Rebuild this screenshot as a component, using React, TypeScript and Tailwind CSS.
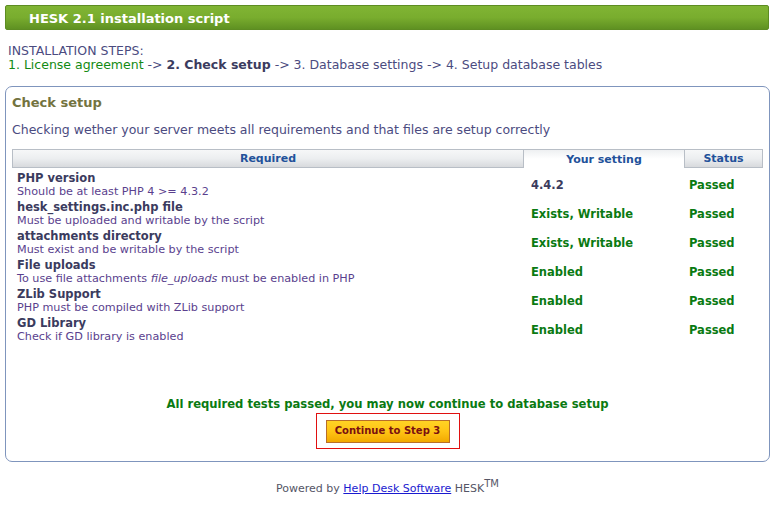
import React from "react";

type Check = {
  title: string;
  desc: React.ReactNode;
  setting: string;
  settingClass: string;
};

const checks: Check[] = [
  {
    title: "PHP version",
    desc: "Should be at least PHP 4 >= 4.3.2",
    setting: "4.4.2",
    settingClass: "text-[#3b3b5e]",
  },
  {
    title: "hesk_settings.inc.php file",
    desc: "Must be uploaded and writable by the script",
    setting: "Exists, Writable",
    settingClass: "text-[#0a7a12]",
  },
  {
    title: "attachments directory",
    desc: "Must exist and be writable by the script",
    setting: "Exists, Writable",
    settingClass: "text-[#0a7a12]",
  },
  {
    title: "File uploads",
    desc: (
      <>
        To use file attachments <i>file_uploads</i> must be enabled in PHP
      </>
    ),
    setting: "Enabled",
    settingClass: "text-[#0a7a12]",
  },
  {
    title: "ZLib Support",
    desc: "PHP must be compiled with ZLib support",
    setting: "Enabled",
    settingClass: "text-[#0a7a12]",
  },
  {
    title: "GD Library",
    desc: "Check if GD library is enabled",
    setting: "Enabled",
    settingClass: "text-[#0a7a12]",
  },
];

export default function App() {
  return (
    <div
      className="w-[775px] h-[510px] bg-white text-[#4b4b7f] overflow-hidden"
      style={{ fontFamily: '"DejaVu Sans", Verdana, sans-serif' }}
    >
      {/* title bar */}
      <div className="mx-[5px] mt-[5px] w-[764px] h-[25px] rounded-[2px] border border-[#5d8c22] bg-gradient-to-b from-[#80b434] via-[#79ad2e] to-[#5f9122] flex items-center pl-[23px] pt-[2px]">
        <span className="text-white font-bold text-[13px] leading-none">HESK 2.1 installation script</span>
      </div>

      {/* steps */}
      <div className="pl-[8px] pt-[14px] text-[12.5px] leading-[14px]">
        <div>INSTALLATION STEPS:</div>
        <div>
          <span className="text-[#138a13]">1. License agreement</span> -&gt;{" "}
          <b className="text-[#3b3b5e]">2. Check setup</b> -&gt; 3. Database settings -&gt; 4. Setup database tables
        </div>
      </div>

      {/* main panel */}
      <div className="mx-[5px] mt-[14px] w-[765px] h-[376px] border border-[#7f95bd] rounded-[7px] px-[6px] flex flex-col">
        <div className="pt-[8px] text-[13px] leading-[16px] font-bold text-[#73733f]">Check setup</div>
        <div className="pt-[11px] text-[12.5px] leading-[15px]">
          Checking wether your server meets all requirements and that files are setup correctly
        </div>

        {/* requirements table */}
        <div className="mt-[12px] w-[751px]">
          <div className="flex h-[19px] text-[11px] font-bold text-[#22519a]">
            <div className="w-[512px] pt-[2px] border border-[#b8bec6] bg-gradient-to-b from-[#f6f7f8] via-[#eceef0] to-[#d8dadd] flex items-center justify-center">
              Required
            </div>
            <div className="w-[160px] pt-[2px] border-t border-[#b8bec6] bg-gradient-to-b from-[#eef0f2] via-[#ffffff] to-[#ffffff] flex items-center justify-center">
              Your setting
            </div>
            <div className="w-[79px] pt-[2px] border border-[#b8bec6] bg-gradient-to-b from-[#f6f7f8] via-[#eceef0] to-[#d8dadd] flex items-center justify-center">
              Status
            </div>
          </div>

          {checks.map((c) => (
            <div key={c.title} className="flex h-[29px] items-center">
              <div className="w-[512px] pl-[5px] pt-[4px]">
                <div className="text-[11.5px] leading-[13px] font-bold text-[#3b3b5e]">{c.title}</div>
                <div className="text-[11.2px] leading-[13px] text-[#5a3f8e]">{c.desc}</div>
              </div>
              <div className={`w-[160px] pl-[7px] pt-[6px] text-[11.5px] font-bold ${c.settingClass}`}>{c.setting}</div>
              <div className="w-[79px] pl-[5px] pt-[6px] text-[11.5px] font-bold text-[#0a7a12]">Passed</div>
            </div>
          ))}
        </div>

        <div className="mt-[55px] text-center text-[11.6px] leading-[15px] font-bold text-[#0a7a12]">
          All required tests passed, you may now continue to database setup
        </div>
        <div className="flex justify-center mt-[1px]">
          <div className="w-[144px] h-[36px] border border-[#e01010] flex items-center justify-center">
            <button className="w-[124px] h-[23px] border border-[#b86e2a] bg-gradient-to-b from-[#ffd324] via-[#ffc414] to-[#f2a900] text-[10px] font-bold text-[#7a1010] leading-none">
              Continue to Step 3
            </button>
          </div>
        </div>
      </div>

      {/* footer */}
      <div className="pt-[19px] text-center text-[11px] text-[#555566]">
        Powered by <a className="text-[#1a1ad0] underline" href="#">Help Desk Software</a> HESK
        <sup className="text-[10px]">TM</sup>
      </div>
    </div>
  );
}
